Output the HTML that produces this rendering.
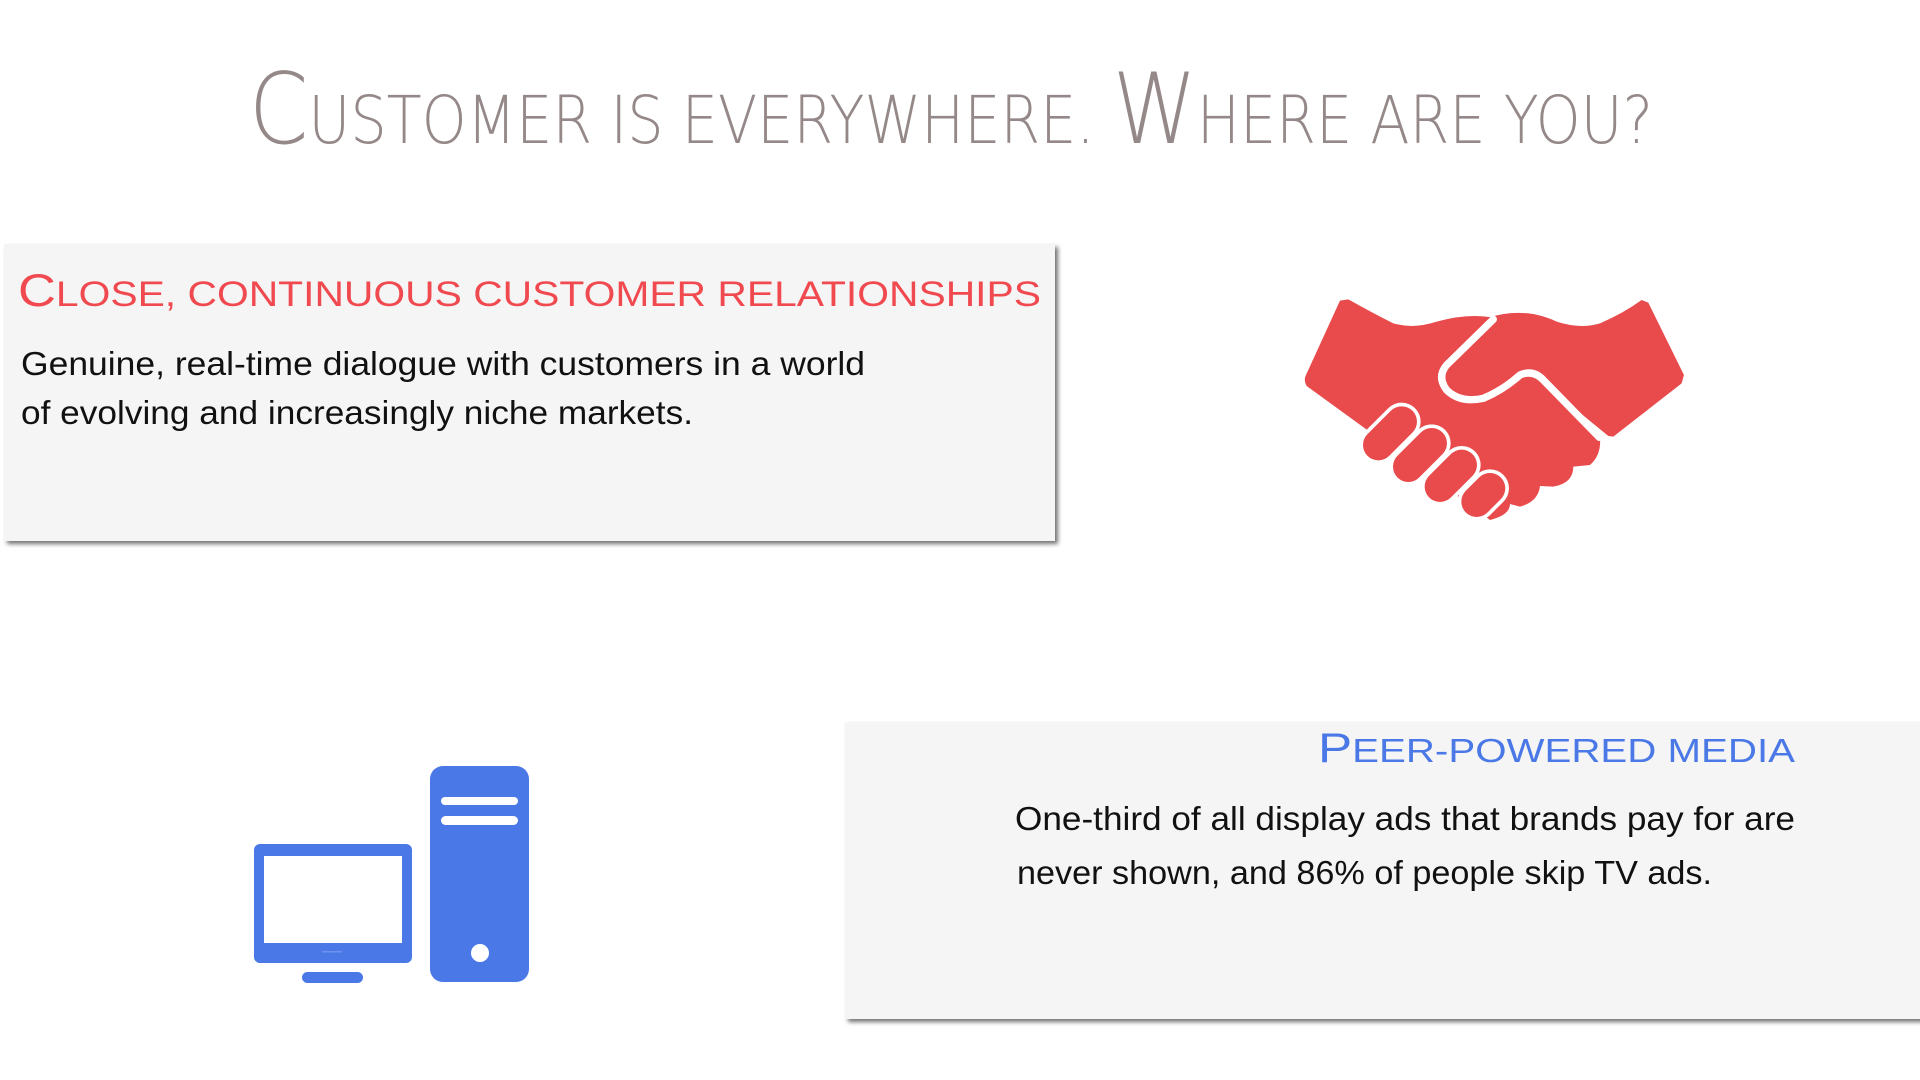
<!DOCTYPE html>
<html><head><meta charset="utf-8"><style>
html,body{margin:0;padding:0;background:#fff;}
svg{display:block}
text{font-family:"Liberation Sans",sans-serif}
.t{font-family:"DejaVu Sans ExtraLight","DejaVu Sans Light","Liberation Sans",sans-serif;font-weight:200}
</style></head><body>
<svg width="1920" height="1080" viewBox="0 0 1920 1080" xmlns="http://www.w3.org/2000/svg">
<defs>
<filter id="sh" x="-5%" y="-5%" width="110%" height="115%">
<feDropShadow dx="3" dy="3" stdDeviation="2" flood-color="#000" flood-opacity="0.55"/>
</filter>
</defs>
<rect width="1920" height="1080" fill="#fff"/>

<text class="t" x="249" y="143" fill="#958888" textLength="1404" lengthAdjust="spacingAndGlyphs"><tspan font-size="98">C</tspan><tspan font-size="66">USTOMER IS EVERYWHERE. </tspan><tspan font-size="98">W</tspan><tspan font-size="66">HERE ARE YOU?</tspan></text>

<rect x="4" y="244" width="1051" height="297" fill="#f5f5f5" filter="url(#sh)"/>
<text x="18" y="306" fill="#f04a50" textLength="1023" lengthAdjust="spacingAndGlyphs"><tspan font-size="45">C</tspan><tspan font-size="35">LOSE, CONTINUOUS CUSTOMER RELATIONSHIPS</tspan></text>
<text x="21" y="375" font-size="33" fill="#111" textLength="844" lengthAdjust="spacingAndGlyphs">Genuine, real-time dialogue with customers in a world</text>
<text x="21" y="424" font-size="33" fill="#111" textLength="672" lengthAdjust="spacingAndGlyphs">of evolving and increasingly niche markets.</text>

<rect x="845" y="722" width="1080" height="297" fill="#f5f5f5" filter="url(#sh)"/>
<text x="1318" y="762" fill="#4a78e6" textLength="477" lengthAdjust="spacingAndGlyphs"><tspan font-size="42">P</tspan><tspan font-size="33">EER-POWERED MEDIA</tspan></text>
<text x="1015" y="830" font-size="33" fill="#111" textLength="780" lengthAdjust="spacingAndGlyphs">One-third of all display ads that brands pay for are</text>
<text x="1017" y="884" font-size="33" fill="#111" textLength="695" lengthAdjust="spacingAndGlyphs">never shown, and 86% of people skip TV ads.</text>

<!-- handshake -->
<g transform="translate(1280,280) scale(0.3333)" fill="#e94a4b">
<path d="M180,62 L205,58 Q280,100 340,130 Q400,148 470,125 Q560,100 635,112 L960,470 Q965,525 930,555 L880,560 Q880,610 820,620 L780,618 Q775,665 720,680 L690,672 Q690,705 630,720 L255,445 L80,318 Q70,300 78,285 Z"/>
<path d="M630,112 Q690,92 760,102 Q800,110 830,125 Q900,148 960,130 Q1030,100 1085,60 L1105,68 L1212,285 L1205,310 L1000,470 L985,468 L780,300 L620,130 Z"/>
<path d="M640,118 L500,255 Q470,290 500,330 Q540,370 610,355 Q670,330 720,285 Q760,268 790,300 L958,472" fill="none" stroke="#fff" stroke-width="22" stroke-linecap="round"/>
<g stroke-linecap="round">
<line x1="590" y1="665" x2="630" y2="625" stroke="#fff" stroke-width="114"/>
<line x1="590" y1="665" x2="630" y2="625" stroke="#e94a4b" stroke-width="92"/>
<line x1="480" y1="620" x2="545" y2="555" stroke="#fff" stroke-width="114"/>
<line x1="480" y1="620" x2="545" y2="555" stroke="#e94a4b" stroke-width="92"/>
<line x1="385" y1="560" x2="455" y2="490" stroke="#fff" stroke-width="114"/>
<line x1="385" y1="560" x2="455" y2="490" stroke="#e94a4b" stroke-width="92"/>
<line x1="295" y1="495" x2="365" y2="425" stroke="#fff" stroke-width="114"/>
<line x1="295" y1="495" x2="365" y2="425" stroke="#e94a4b" stroke-width="92"/>
</g>
</g>

<!-- computer -->
<g fill="#4a78e6">
<rect x="254" y="844" width="158" height="119" rx="6"/>
<rect x="264" y="856" width="138" height="87" fill="#fff"/>
<rect x="322" y="951" width="20" height="1.5" fill="#6f93ec"/>
<rect x="302" y="972" width="61" height="11" rx="5.5"/>
<rect x="430" y="766" width="99" height="216" rx="13"/>
<rect x="441" y="797" width="77" height="8" rx="4" fill="#fff"/>
<rect x="441" y="816" width="77" height="9" rx="4.5" fill="#fff"/>
<circle cx="480" cy="953" r="9" fill="#fff"/>
</g>
</svg>
</body></html>
